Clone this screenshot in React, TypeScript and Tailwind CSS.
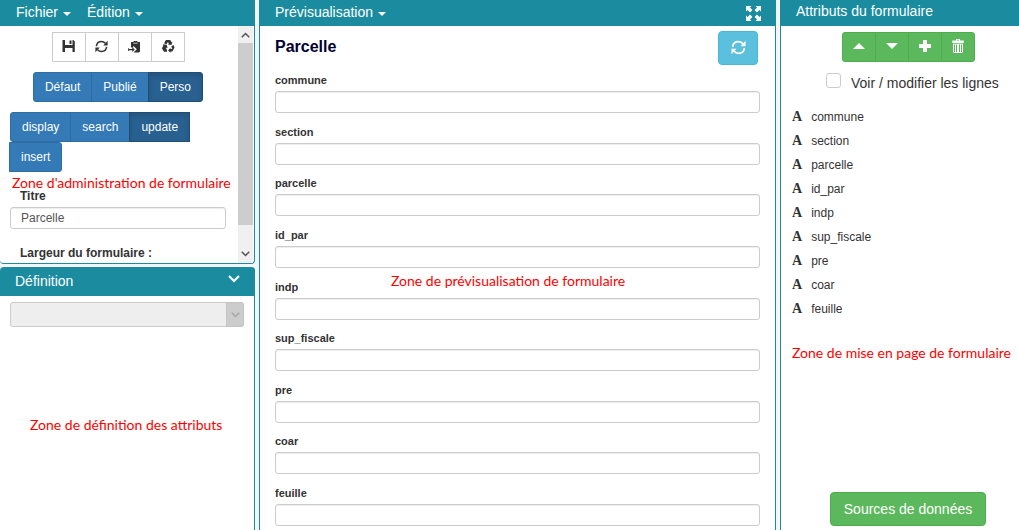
import React from 'react';

const attributes = ['commune', 'section', 'parcelle', 'id_par', 'indp', 'sup_fiscale', 'pre', 'coar', 'feuille'];

function Caret() {
  return (
    <svg viewBox="0 0 8 4" className="h-1 w-2 fill-current" aria-hidden="true">
      <path d="M0 0h8L4 4z" />
    </svg>
  );
}

function RefreshIcon({ className }: { className: string }) {
  return (
    <svg viewBox="0 0 14 14" className={className} fill="none" stroke="currentColor" strokeWidth="1.6" aria-hidden="true">
      <path d="M1.500 6.500C1.900 3.400 4.200 1.600 6.900 1.600c1.800 0 3.200.7 4.300 2" />
      <path d="M12.500 7.500C12.100 10.600 9.800 12.400 7.100 12.400c-1.800 0-3.200-.7-4.300-2" />
      <path d="M13.600.8v5H8.900z" fill="currentColor" stroke="none" />
      <path d="M.4 13.200v-5h4.700z" fill="currentColor" stroke="none" />
    </svg>
  );
}

function SaveIcon() {
  return (
    <svg viewBox="0 0 13 12" className="h-3 w-[13px] fill-current" aria-hidden="true">
      <path fillRule="evenodd" d="M.5 0H3v5h7.500V0h.8l1.500 1.500V12h-2.300V8H3v4H.5zM7.500.5h2v3.500h-2z" />
    </svg>
  );
}

function PasteIcon() {
  return (
    <svg viewBox="0 0 13 13" className="size-[13px] fill-current" aria-hidden="true">
      <path d="M3 2h2.200L6 1h3l.8 1H12v9.500l-1 1H5.500L8.800 9.200 5.300 5.700v1.800H3z" />
      <path d="M5.300 3.200h4.400" stroke="#fff" strokeWidth=".7" />
      <path d="M.5 9h3.800V7.300l2.500 2.300-2.500 2.300v-1.700H.5z" />
      <path d="M.2 8.200h.9v2.800H.2z" />
    </svg>
  );
}

function RecycleIcon() {
  return (
    <svg viewBox="0 0 14 14" className="size-[14px] fill-current" aria-hidden="true">
      <path d="M4.900 1.100h4.300l1.300 2.100 1.100-.6-1.200 3.500-3.600-.7 1.100-.7-1-1.700-1.500 2.500-2.300-1.300z" />
      <path d="M2.500 5.300l3.200.6 1 3.300-1-.6-.9 1.600H6v2.600H3L.9 9.300l1.600-2.700-1-.6z" />
      <path d="M10.300 7.200l2.200-1.300 1 2.600-2.100 4.100H9.500v1.200L7.100 11.400l2.400-2.600V10h1.800z" />
    </svg>
  );
}

function ExpandIcon() {
  return (
    <svg viewBox="0 0 15 15" className="size-[15px] fill-current" aria-hidden="true">
      <path d="M0 0h5.500L3.900 1.600l2.500 2.500-2.300 2.300-2.500-2.500L0 5.500zM15 0v5.500l-1.600-1.600-2.500 2.500-2.300-2.300 2.500-2.500L9.500 0zM0 15V9.500l1.600 1.600 2.500-2.500 2.300 2.300-2.500 2.500L5.500 15zM15 15H9.500l1.600-1.600-2.500-2.500 2.300-2.300 2.500 2.500L15 9.500z" />
    </svg>
  );
}

function TrashIcon() {
  return (
    <svg viewBox="0 0 12 14" className="h-[14px] w-3" fill="currentColor" aria-hidden="true">
      <path fillRule="evenodd" d="M4 0h4v1.500h3.700V4H.3V1.500H4zM5 .8v.8h2V.8z" />
      <path fillRule="evenodd" d="M1 4.800h10V13l-1 1H2l-1-1zM2 5.500V13h1V5.500zM4 5.500V13h1V5.500zM7 5.500V13h1V5.500zM9 5.500V13h1V5.500z" />
    </svg>
  );
}

function Chevron({ className }: { className: string }) {
  return (
    <svg viewBox="0 0 12 8" className={className} fill="none" stroke="currentColor" strokeWidth="2" aria-hidden="true">
      <path d="M1 1l5 5 5-5" />
    </svg>
  );
}

function Menu({ label }: { label: string }) {
  return (
    <button type="button" className="flex items-center gap-[5px]">
      {label}
      <span className="pt-1"><Caret /></span>
    </button>
  );
}

function Segments({ items, active }: { items: string[]; active: string }) {
  return (
    <>
      {items.map((item, i) => (
        <button
          key={item}
          type="button"
          aria-pressed={item === active}
          className={
            'h-[30px] border px-[11px] first:rounded-l-[3px] last:rounded-r-[3px] ' +
            (i > 0 ? '-ml-px ' : '') +
            (item === active
              ? 'z-10 border-[#204d74] bg-[#286090] shadow-[inset_0_3px_5px_rgba(0,0,0,0.125)]'
              : 'border-[#2e6da4] bg-[#337ab7]')
          }
        >
          {item}
        </button>
      ))}
    </>
  );
}

const fieldClass = 'w-full rounded-[3px] border border-[#ccc] bg-white shadow-[inset_0_1px_1px_rgba(0,0,0,0.075)]';
const noteClass = "absolute whitespace-nowrap font-['Lato',sans-serif] text-sm leading-4 text-[#f00]";

function AdminPanel() {
  const tools = [
    { label: 'Enregistrer', icon: <SaveIcon /> },
    { label: 'Actualiser', icon: <RefreshIcon className="size-[13px]" /> },
    { label: 'Coller', icon: <PasteIcon /> },
    { label: 'Recycler', icon: <RecycleIcon /> },
  ];
  return (
    <section className="overflow-hidden rounded-b-[4px] border-r border-b border-[#1b8ca0] bg-white">
      <header className="flex h-[26px] items-center gap-4 bg-[#1b8ca0] pr-4 pb-[2px] pl-4 text-sm text-white">
        <Menu label="Fichier" />
        <Menu label="Édition" />
      </header>
      <div className="flex h-[237px]">
        <div className="relative min-w-0 flex-1 overflow-hidden pt-[6px] pr-3 pl-[10px]">
          <div className="flex justify-center pb-px">
            {tools.map((tool, i) => (
              <button
                key={tool.label}
                type="button"
                aria-label={tool.label}
                className={'flex h-[30px] w-[34px] items-center justify-center border border-[#ccc] bg-white pb-[2px] text-[#333] ' + (i > 0 ? '-ml-px' : '')}
              >
                {tool.icon}
              </button>
            ))}
          </div>
          <div className="mt-[9px] flex justify-center text-white">
            <Segments items={['Défaut', 'Publié', 'Perso']} active="Perso" />
          </div>
          <div className="mt-[10px] flex flex-wrap text-white">
            <Segments items={['display', 'search', 'update', 'insert']} active="update" />
          </div>
          <label htmlFor="titre" className="mt-4 block pl-[10px] leading-4 font-bold">Titre</label>
          <input id="titre" defaultValue="Parcelle" className={fieldClass + ' mt-[3px] block h-[22px] px-[10px] text-[#555]'} />
          <p className="mt-4 pl-[10px] leading-4 font-bold">Largeur du formulaire :</p>
          <p className={noteClass + ' top-[149px] left-3'}>Zone d'administration de formulaire</p>
        </div>
        <div className="mr-px flex w-[15px] flex-col bg-[#f0f0f0] text-[#555]" aria-hidden="true">
          <div className="flex h-[17px] items-center justify-center"><Chevron className="h-[6px] w-[9px] rotate-180" /></div>
          <div className="h-[182px] bg-[#cdcdcd]" />
          <div className="flex flex-1 items-end justify-center pb-[6px]"><Chevron className="h-[6px] w-[9px]" /></div>
        </div>
      </div>
    </section>
  );
}

function DefinitionPanel() {
  return (
    <section className="relative mt-[3px] flex-1 rounded-t-[4px] border-r border-[#1b8ca0] bg-white">
      <header className="-mr-px flex h-[29px] items-center justify-between rounded-t-[4px] bg-[#1b8ca0] px-[15px] pb-px text-sm text-white">
        <h2>Définition</h2>
        <button type="button" aria-label="Replier" className="pb-1"><Chevron className="h-2 w-3" /></button>
      </header>
      <div className="px-[10px] pt-[6px]">
        <div className="relative">
          <select disabled aria-label="Définition" className="block h-[25px] w-full appearance-none rounded-[3px] border border-[#ccc] bg-[#eee]" />
          <span className="absolute inset-y-0 right-0 flex w-[18px] items-center justify-center rounded-r-[3px] border border-[#c4c4c4] bg-[#ccc] text-[#a5a5a5]">
            <Chevron className="h-[6px] w-[9px]" />
          </span>
        </div>
      </div>
      <p className={noteClass + ' top-[150px] left-[30px]'}>Zone de définition des attributs</p>
    </section>
  );
}

function PreviewPanel() {
  return (
    <main className="relative flex min-w-0 flex-1 flex-col border-x border-[#1b8ca0] bg-white">
      <header className="flex h-[26px] items-center justify-between bg-[#1b8ca0] pr-[14px] pl-[15px] text-sm text-white">
        <div className="pb-[2px]"><Menu label="Prévisualisation" /></div>
        <button type="button" aria-label="Plein écran"><ExpandIcon /></button>
      </header>
      <div className="flex h-[39px] justify-between pt-[5px] pr-[17px] pl-[15px]">
        <h1 className="pt-[6px] text-base leading-5 font-bold text-[#000033]">Parcelle</h1>
        <button
          type="button"
          aria-label="Actualiser"
          className="flex h-[34px] w-10 items-center justify-center rounded-[4px] border border-[#46b8da] bg-[#5bc0de] pb-[2px] text-white"
        >
          <RefreshIcon className="size-[15px]" />
        </button>
      </div>
      <form className="flex flex-1 flex-col justify-between pt-[7px] pr-[15px] pb-1 pl-[15px]">
        {attributes.map((name) => (
          <div key={name}>
            <label htmlFor={name} className="block text-[11px] leading-4 font-bold">{name}</label>
            <input id={name} className={fieldClass + ' mt-[3px] block h-[22px] px-2'} />
          </div>
        ))}
      </form>
      <p className={noteClass + ' top-[273px] left-[131px]'}>Zone de prévisualisation de formulaire</p>
    </main>
  );
}

function AttributesPanel() {
  const actions = [
    { label: 'Monter', icon: <svg viewBox="0 0 12 6" className="h-[6px] w-3 fill-current"><path d="M0 6h12L6 0z" /></svg> },
    { label: 'Descendre', icon: <svg viewBox="0 0 12 6" className="h-[6px] w-3 fill-current"><path d="M0 0h12L6 6z" /></svg> },
    { label: 'Ajouter', icon: <svg viewBox="0 0 12 12" className="size-3 fill-current"><path d="M4 0h4v4h4v4H8v4H4V8H0V4h4z" /></svg> },
    { label: 'Supprimer', icon: <TrashIcon /> },
  ];
  return (
    <aside className="relative flex w-[239px] shrink-0 flex-col border-l border-[#1b8ca0] bg-white">
      <header className="flex h-[26px] items-center bg-[#1b8ca0] px-[15px] pb-1 text-sm text-white">
        <h2>Attributs du formulaire</h2>
      </header>
      <div className="mt-[6px] flex justify-center pl-4">
        {actions.map((action, i) => (
          <button
            key={action.label}
            type="button"
            aria-label={action.label}
            className={'flex h-[30px] w-[34px] items-center justify-center border border-[#4cae4c] bg-[#5cb85c] pb-[2px] text-white first:rounded-l-[3px] last:rounded-r-[3px] ' + (i > 0 ? '-ml-px' : '')}
          >
            {action.icon}
          </button>
        ))}
      </div>
      <div className="mt-[11px] flex gap-[10px] pl-[45px] text-sm">
        <input id="lignes" type="checkbox" className="size-[15px] appearance-none rounded-[3px] border border-[#ccc] bg-white" />
        <label htmlFor="lignes" className="whitespace-nowrap">Voir / modifier les lignes</label>
      </div>
      <ul className="mt-[12px] pl-[11px]">
        {attributes.map((name) => (
          <li key={name} className="flex h-6 items-center gap-[9px]">
            <span className="font-['Liberation_Serif',serif] text-sm font-bold" aria-hidden="true">A</span>
            {name}
          </li>
        ))}
      </ul>
      <p className={noteClass + ' top-[345px] left-[11px]'}>Zone de mise en page de formulaire</p>
      <div className="mt-auto flex justify-center pb-1 pl-4">
        <button type="button" className="h-[34px] rounded-[4px] border border-[#4cae4c] bg-[#5cb85c] px-[13px] text-sm text-white">
          Sources de données
        </button>
      </div>
    </aside>
  );
}

export default function App() {
  return (
    <div className="flex min-h-screen gap-1 bg-[#f5f5f5] font-['Liberation_Sans',Arial,sans-serif] text-xs text-[#333]">
      <div className="flex w-[255px] shrink-0 flex-col">
        <AdminPanel />
        <DefinitionPanel />
      </div>
      <PreviewPanel />
      <AttributesPanel />
    </div>
  );
}
